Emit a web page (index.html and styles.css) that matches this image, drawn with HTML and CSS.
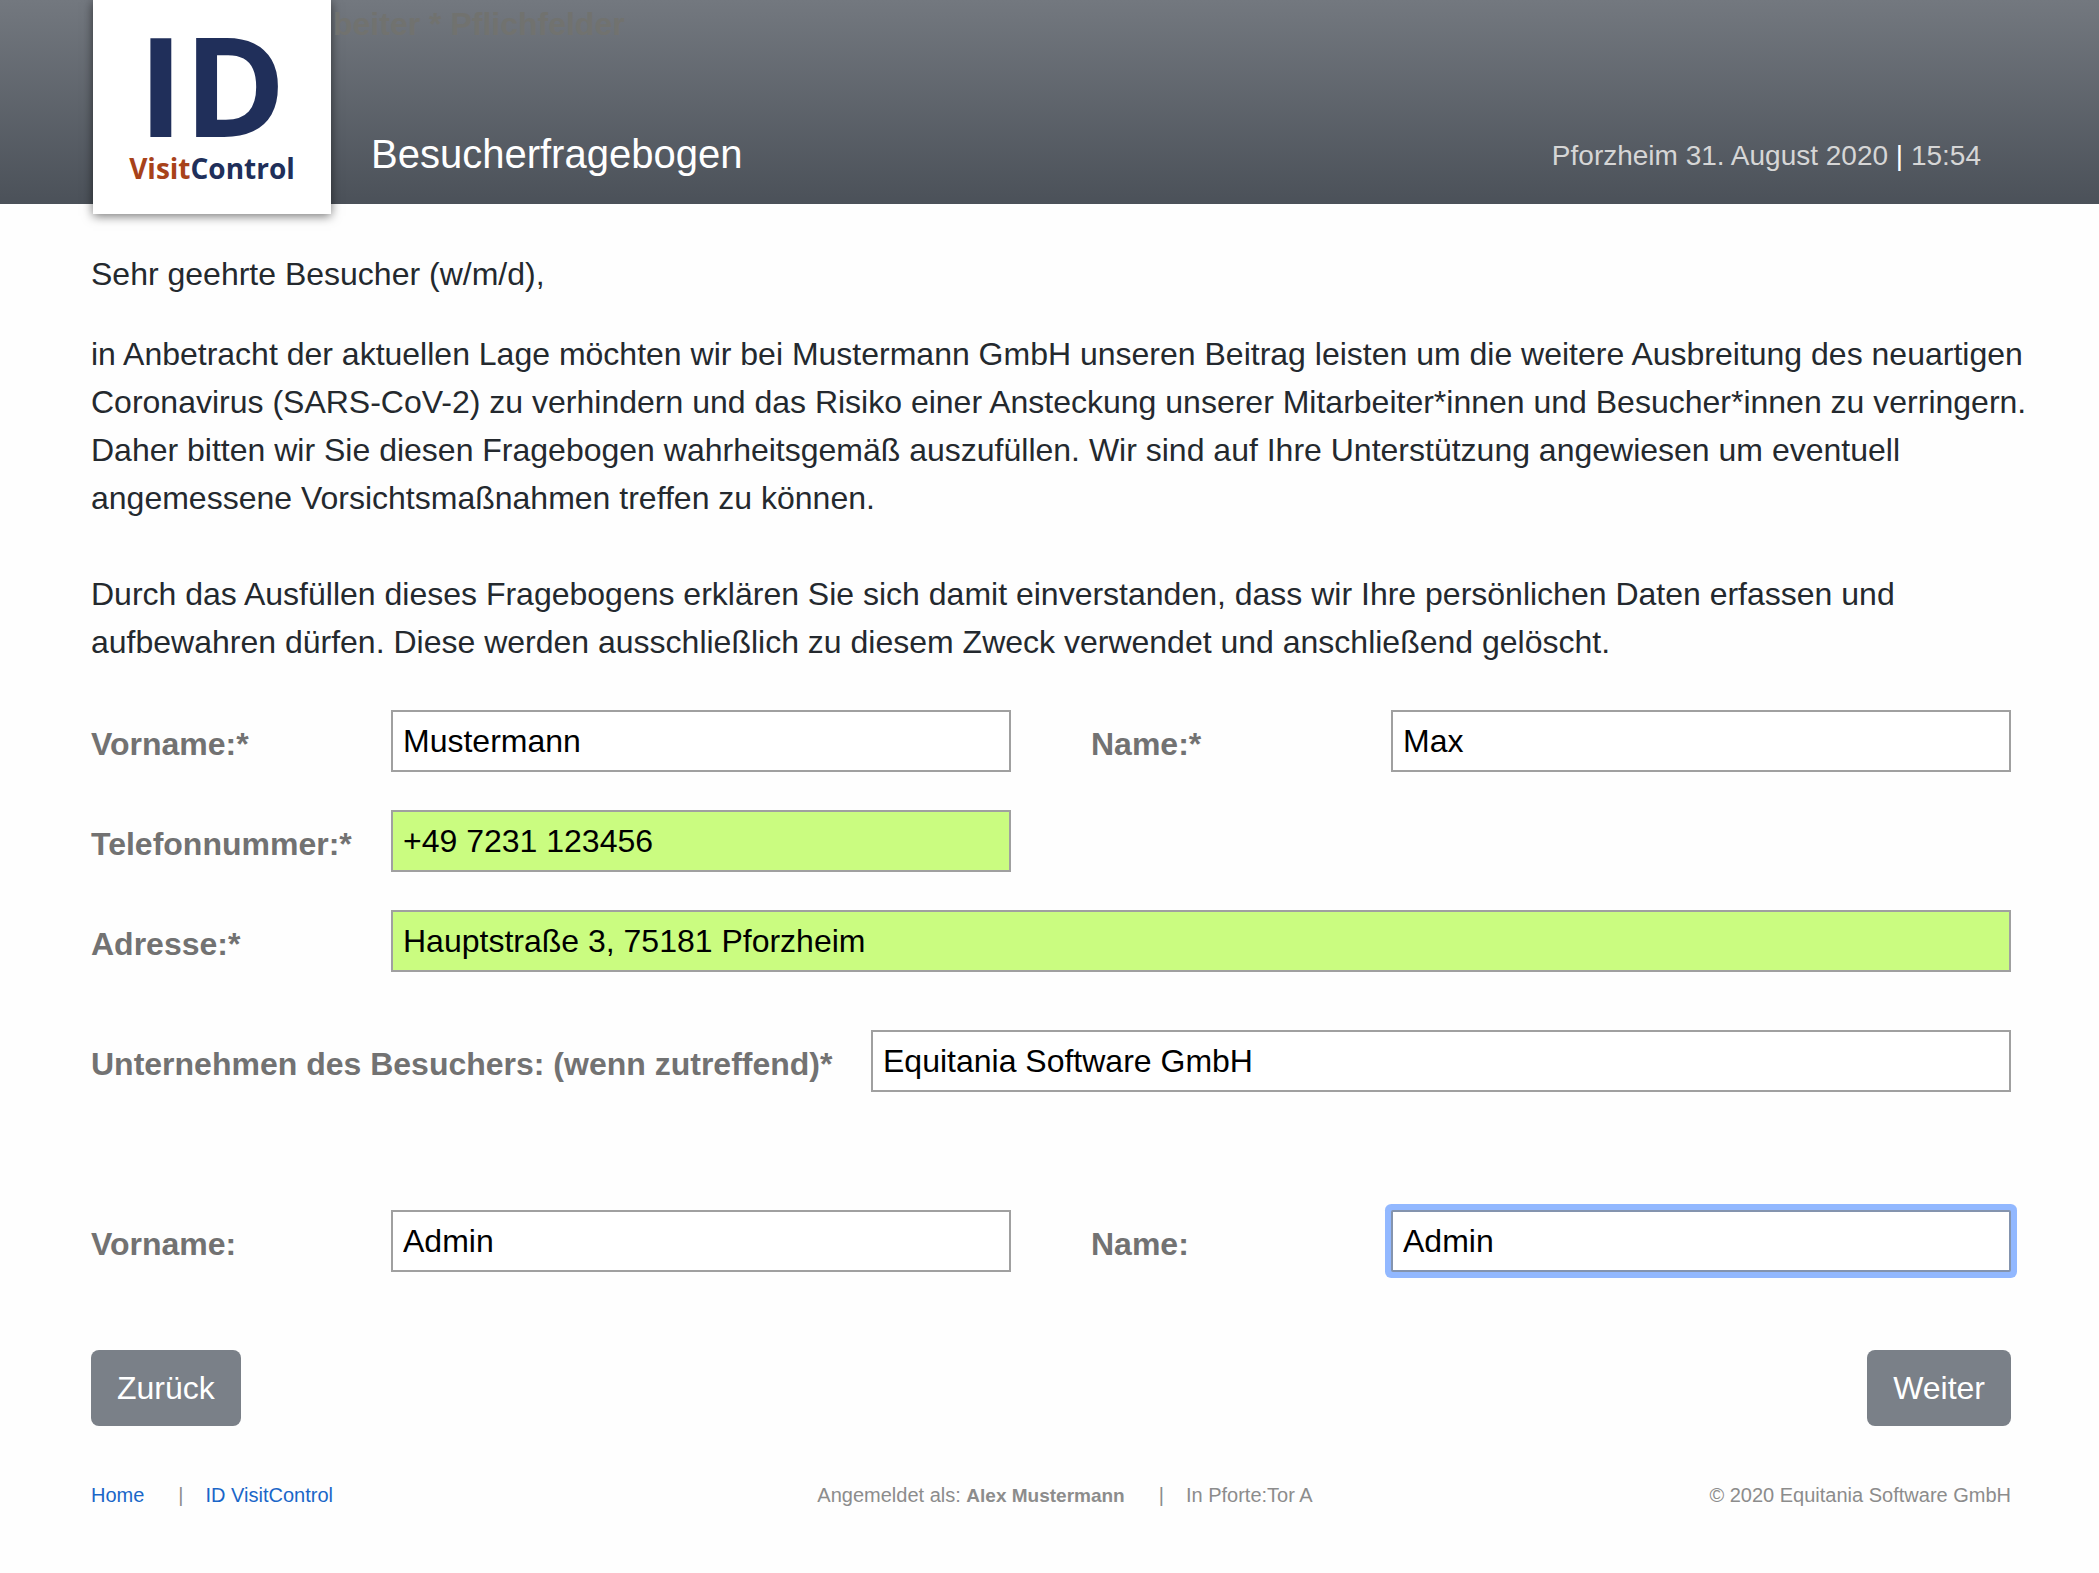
FILE: index.html
```
<!DOCTYPE html>
<html lang="de">
<head>
<meta charset="utf-8">
<meta name="viewport" content="width=device-width, initial-scale=1">
<title>Besucherfragebogen</title>
<link rel="stylesheet" href="styles.css">
</head>
<body>
<header class="header">
  <a class="logo" href="#">
    <span class="logo-mark">ID</span>
    <span class="logo-name"><span class="logo-accent">Visit</span>Control</span>
  </a>
  <div class="heading">
    <p class="heading-note">beiter * Pflichfelder</p>
    <h1 class="heading-title">Besucherfragebogen</h1>
  </div>
  <p class="header-date">Pforzheim 31. August 2020 <span class="header-bar">|</span> 15:54</p>
</header>

<main class="main">
  <section class="intro">
    <p>Sehr geehrte Besucher (w/m/d),</p>
    <p>in Anbetracht der aktuellen Lage möchten wir bei Mustermann GmbH unseren Beitrag leisten um die weitere Ausbreitung des neuartigen Coronavirus (SARS-CoV-2) zu verhindern und das Risiko einer Ansteckung unserer Mitarbeiter*innen und Besucher*innen zu verringern. Daher bitten wir Sie diesen Fragebogen wahrheitsgemäß auszufüllen. Wir sind auf Ihre Unterstützung angewiesen um eventuell angemessene Vorsichtsmaßnahmen treffen zu können.<br><br>Durch das Ausfüllen dieses Fragebogens erklären Sie sich damit einverstanden, dass wir Ihre persönlichen Daten erfassen und aufbewahren dürfen. Diese werden ausschließlich zu diesem Zweck verwendet und anschließend gelöscht.</p>
  </section>

  <form class="form">
    <div class="row">
      <div class="field">
        <label class="label" for="vorname">Vorname:*</label>
        <input class="input" id="vorname" type="text" value="Mustermann">
      </div>
      <div class="field">
        <label class="label" for="name">Name:*</label>
        <input class="input" id="name" type="text" value="Max">
      </div>
    </div>
    <div class="row">
      <div class="field">
        <label class="label" for="telefon">Telefonnummer:*</label>
        <input class="input input-valid" id="telefon" type="tel" value="+49 7231 123456">
      </div>
    </div>
    <div class="row row-single">
      <div class="field">
        <label class="label" for="adresse">Adresse:*</label>
        <input class="input input-valid" id="adresse" type="text" value="Hauptstraße 3, 75181 Pforzheim">
      </div>
    </div>
    <div class="row row-single row-company">
      <div class="field field-wide">
        <label class="label" for="firma">Unternehmen des Besuchers: (wenn zutreffend)*</label>
        <input class="input" id="firma" type="text" value="Equitania Software GmbH">
      </div>
    </div>
    <div class="row row-host">
      <div class="field">
        <label class="label" for="host-vorname">Vorname:</label>
        <input class="input" id="host-vorname" type="text" value="Admin">
      </div>
      <div class="field">
        <label class="label" for="host-name">Name:</label>
        <input class="input input-active" id="host-name" type="text" value="Admin">
      </div>
    </div>
    <div class="actions">
      <button class="button" type="button">Zurück</button>
      <button class="button" type="submit">Weiter</button>
    </div>
  </form>
</main>

<footer class="footer">
  <nav class="footer-nav">
    <a href="#">Home</a>
    <span class="footer-bar">|</span>
    <a href="#">ID VisitControl</a>
  </nav>
  <div class="footer-user">
    <span>Angemeldet als: <strong class="footer-login">Alex Mustermann</strong></span>
    <span class="footer-bar">|</span>
    <span>In Pforte:Tor A</span>
  </div>
  <p class="footer-copy">© 2020 Equitania Software GmbH</p>
</footer>
</body>
</html>
```
FILE: styles.css
```
*, *::before, *::after { box-sizing: border-box; }

body {
  margin: 0;
  background: #fefefe;
  color: #24292e;
  font-family: "Liberation Sans", Arial, sans-serif;
  font-size: 32px;
  line-height: 48px;
}

p, h1 { margin: 0; }

.header {
  display: flex;
  height: 204px;
  padding: 0 118px 0 93px;
  background: linear-gradient(#73787f, #4b5159);
}

.logo {
  display: flex;
  flex-direction: column;
  align-items: center;
  gap: 2px;
  width: 238px;
  height: 214px;
  padding-top: 14px;
  background: #fff;
  box-shadow: 0 2px 10px rgba(0, 0, 0, 0.55);
  color: #202f5a;
  font-family: "Open Sans", "Noto Sans", sans-serif;
  font-weight: 700;
  text-decoration: none;
}

.logo-mark {
  font-size: 138px;
  line-height: 138px;
}

.logo-name {
  font-size: 28px;
  line-height: 28px;
}

.logo-accent { color: #a8421a; }

.heading {
  display: flex;
  flex-direction: column;
  justify-content: space-between;
  padding: 0 0 24px 2px;
}

.heading-note {
  color: #71726f;
  font-weight: 700;
}

.heading-title {
  padding-left: 38px;
  color: #fff;
  font-size: 40px;
  font-weight: 400;
  line-height: 52px;
}

.header-date {
  align-self: flex-end;
  margin-left: auto;
  padding-bottom: 24px;
  color: #d6d6d6;
  font-size: 28px;
}

.header-bar { color: #fff; }

.main { padding: 46px 88px 0 91px; }

.intro { margin-right: -24px; }

.intro p + p { margin-top: 32px; }

.form {
  display: flex;
  flex-direction: column;
  gap: 38px;
  margin-top: 44px;
}

.row {
  display: grid;
  grid-template-columns: 1fr 1fr;
  gap: 80px;
}

.row-single { grid-template-columns: 1fr; }

.row-company { margin-top: 20px; }

.row-host { margin-top: 80px; }

.field {
  display: grid;
  grid-template-columns: 300px 1fr;
  align-items: center;
}

.field-wide { grid-template-columns: 780px 1fr; }

.label {
  padding-top: 6px;
  color: #727272;
  font-weight: 700;
}

.input {
  width: 100%;
  min-width: 0;
  height: 62px;
  padding: 0 10px;
  border: 2px solid #a0a0a0;
  border-radius: 0;
  background: #fff;
  color: #000;
  font: inherit;
}

.input-valid { background: #cafc80; }

.input:focus { outline: none; }

.input-active, .input:focus {
  border-color: #8494ae;
  border-radius: 2px;
  box-shadow: 0 0 0 6px #92b8ff;
}

.actions {
  display: flex;
  justify-content: space-between;
  margin-top: 40px;
}

.button {
  padding: 14px 26px;
  border: 0;
  border-radius: 8px;
  background: #7a8088;
  color: #fff;
  font: inherit;
}

.footer {
  display: grid;
  grid-template-columns: 1fr auto 1fr;
  margin-top: 54px;
  padding: 0 88px 32px 91px;
  color: #8c8c8c;
  font-size: 20px;
  line-height: 30px;
}

.footer a {
  color: #1a66c8;
  text-decoration: none;
}

.footer-nav, .footer-user { display: flex; }

.footer-user { padding-left: 28px; }

.footer-bar { padding: 0 22px 0 34px; }

.footer-login {
  font-size: 19px;
}

.footer-copy { text-align: right; }
```
